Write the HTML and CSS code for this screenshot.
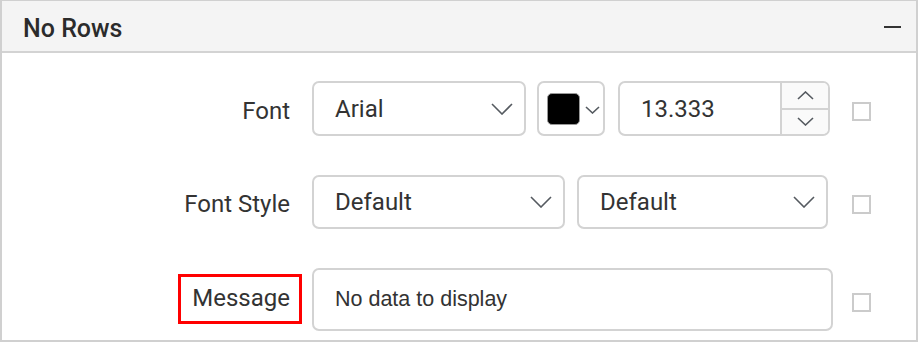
FILE: index.html
```html
<!DOCTYPE html>
<html lang="en">

<head>
	<meta charset="UTF-8">
	<meta name="viewport" content="width=device-width, initial-scale=1.0">
	<title>No Rows</title>

	<link rel="stylesheet" href="styles.css">
</head>

<body>
	<div class="panel">
		<div class="panel-head">
			<h2>No Rows</h2>
			<span class="collapse"></span>
		</div>
		<div class="panel-body">
			<!-- font -->
			<label class="prop-label">Font</label>
			<div class="prop-ctrl">
				<div class="dropdown dd-font">
					<span>Arial</span>
					<svg class="chev" width="22" height="12" viewBox="0 0 22 12"><polyline points="1,1 11,11 21,1" /></svg>
				</div>
				<div class="color-pick">
					<span class="swatch"></span>
					<svg class="chev-sm" width="15" height="8" viewBox="0 0 15 8"><polyline points="1,1 7.5,7 14,1" /></svg>
				</div>
				<div class="numeric">
					<span class="num-val">13.333</span>
					<div class="spin">
						<div class="spin-btn">
							<svg width="17" height="9" viewBox="0 0 17 9"><polyline points="1,8 8.5,1 16,8" /></svg>
						</div>
						<div class="spin-btn">
							<svg width="17" height="9" viewBox="0 0 17 9"><polyline points="1,1 8.5,8 16,1" /></svg>
						</div>
					</div>
				</div>
			</div>
			<span class="check"></span>

			<!-- font style -->
			<label class="prop-label lbl-short">Font Style</label>
			<div class="prop-ctrl">
				<div class="dropdown dd-style">
					<span>Default</span>
					<svg class="chev" width="22" height="12" viewBox="0 0 22 12"><polyline points="1,1 11,11 21,1" /></svg>
				</div>
				<div class="dropdown dd-weight">
					<span>Default</span>
					<svg class="chev" width="22" height="12" viewBox="0 0 22 12"><polyline points="1,1 11,11 21,1" /></svg>
				</div>
			</div>
			<span class="check"></span>

			<!-- message -->
			<label class="prop-label"><span class="marked">Message</span></label>
			<div class="prop-ctrl">
				<div class="message-box">No data to display</div>
			</div>
			<span class="check"></span>
		</div>
	</div>
</body>

</html>
```

FILE: styles.css
```css
* {
	margin: 0;
	padding: 0;
	box-sizing: border-box;
}

body {
	background: #fff;
	font-family: Roboto, "Liberation Sans", sans-serif;
	color: #333;
}

.panel {
	width: 918px;
	height: 342px;
	border: 2px solid #d0d0d0;
	border-top-width: 1px;
	background: #fff;
}

.panel-head {
	display: flex;
	align-items: center;
	justify-content: space-between;
	height: 52px;
	padding: 4px 15px 0 21px;
	background: #f4f4f4;
	border-bottom: 2px solid #d3d3d3;
}

.panel-head h2 {
	font-size: 25px;
	font-weight: 500;
	color: #2b2b2b;
}

.collapse {
	width: 17px;
	height: 2px;
	margin-top: -2px;
	background: #333;
}

.panel-body {
	display: grid;
	grid-template-columns: 310px 521px auto;
	grid-template-rows: 55px 54px 63px;
	row-gap: 39px;
	padding-top: 28px;
}

.prop-label {
	align-self: start;
	padding: 5px 22px 0 0;
	line-height: 50px;
	font-size: 24px;
	text-align: right;
	color: #333;
}

.lbl-short {
	padding-top: 4px;
}

.prop-ctrl {
	display: flex;
	align-items: center;
}

.check {
	align-self: center;
	width: 19px;
	height: 19px;
	margin: 5px 0 0 19px;
	border: 2px solid #cbcbcb;
	background: #fff;
}

.dropdown,
.color-pick,
.numeric,
.message-box {
	border: 2px solid #d3d3d3;
	border-radius: 7px;
	background: #fff;
}

.dropdown {
	display: flex;
	align-items: center;
	justify-content: space-between;
	height: 55px;
	padding: 0 11px 0 21px;
	font-size: 24px;
}

.dd-style,
.dd-weight {
	height: 54px;
}

.dd-font {
	width: 214px;
}

.dd-style {
	width: 253px;
}

.dd-weight {
	width: 251px;
	margin-left: 12px;
}

.chev polyline,
.chev-sm polyline,
.spin-btn polyline {
	fill: none;
	stroke: #555a60;
	stroke-width: 1.6;
}

.color-pick {
	display: flex;
	align-items: center;
	width: 68px;
	height: 55px;
	margin-left: 11px;
	padding-left: 8px;
}

.swatch {
	width: 33px;
	height: 32px;
	border: 1px solid #999;
	border-radius: 5px;
	background: #000;
}

.chev-sm {
	margin: 2px 0 0 5px;
}

.numeric {
	display: flex;
	width: 212px;
	height: 55px;
	margin-left: 13px;
	overflow: hidden;
}

.num-val {
	flex: 1;
	align-self: center;
	padding-left: 21px;
	font-size: 24px;
}

.spin {
	display: flex;
	flex-direction: column;
	width: 48px;
	border-left: 2px solid #d3d3d3;
	background: #fafafa;
}

.spin-btn {
	flex: 1;
	display: flex;
	align-items: center;
	justify-content: center;
}

.spin-btn + .spin-btn {
	border-top: 2px solid #d3d3d3;
}

.message-box {
	width: 521px;
	height: 63px;
	padding: 17px 0 0 21px;
	font-family: "Liberation Sans", Arial, sans-serif;
	font-size: 21.5px;
	color: #333;
}

.marked {
	position: relative;
}

.marked::after {
	content: "";
	position: absolute;
	top: -10px;
	bottom: -12px;
	left: -14px;
	right: -12px;
	border: 3px solid #f00;
}
```
